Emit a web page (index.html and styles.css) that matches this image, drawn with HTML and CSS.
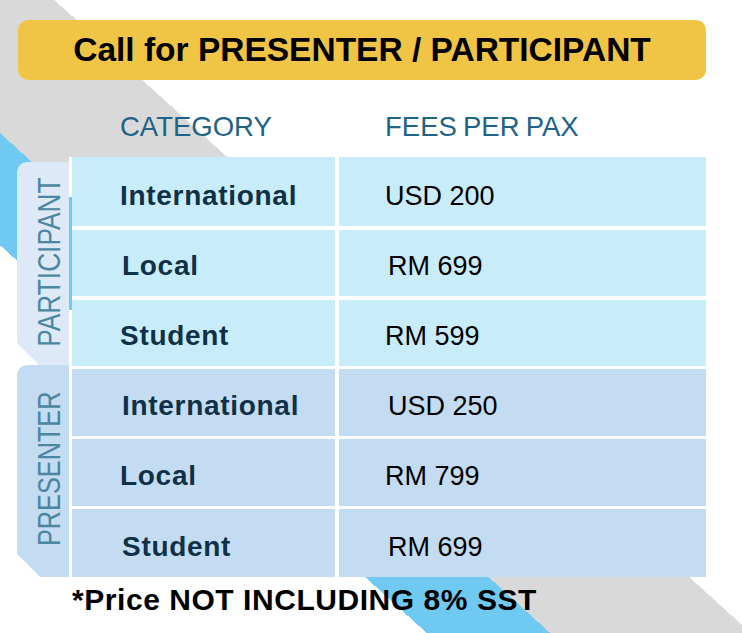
FILE: index.html
```html
<!DOCTYPE html>
<html lang="en">
<head>
<meta charset="utf-8">
<title>Call for Presenter / Participant</title>
<link rel="stylesheet" href="styles.css">
</head>
<body>
<div class="page">
  <div class="title">Call for PRESENTER / PARTICIPANT</div>
  <div class="heads">
    <span class="h-cat">CATEGORY</span>
    <span class="h-fee">FEES PER PAX</span>
  </div>
  <div class="table">
    <div class="group participant">
      <div class="tab"><span>PARTICIPANT</span></div>
      <div class="spine"></div>
      <div class="rows">
        <div class="row"><div class="cat">International</div><div class="fee">USD 200</div></div>
        <div class="row nudge"><div class="cat">Local</div><div class="fee">RM 699</div></div>
        <div class="row"><div class="cat">Student</div><div class="fee">RM 599</div></div>
      </div>
    </div>
    <div class="group presenter">
      <div class="tab"><span>PRESENTER</span></div>
      <div class="spine"></div>
      <div class="rows">
        <div class="row nudge"><div class="cat">International</div><div class="fee">USD 250</div></div>
        <div class="row"><div class="cat">Local</div><div class="fee">RM 799</div></div>
        <div class="row nudge"><div class="cat">Student</div><div class="fee">RM 699</div></div>
      </div>
    </div>
  </div>
  <div class="note">*Price NOT INCLUDING 8% SST</div>
</div>
</body>
</html>
```
FILE: styles.css
```css
* { box-sizing: border-box; }
html, body { margin: 0; padding: 0; }

.page {
  width: 742px;
  height: 633px;
  overflow: hidden;
  padding: 20px 36px 0 17px;
  background: linear-gradient(42.27deg,
    #ffffff 287px,
    #6fc9f1 287px, #6fc9f1 370px,
    #d9d9d9 370px, #d9d9d9 505px,
    #ffffff 505px);
  font-family: "Liberation Sans", Arial, sans-serif;
}

.title {
  margin-left: 1px;
  height: 60px;
  border-radius: 10px;
  background: #f0c546;
  display: flex;
  align-items: center;
  justify-content: center;
  font-weight: 700;
  font-size: 33.5px;
  line-height: 1;
  color: #000;
}

.heads {
  display: flex;
  margin-top: 33px;
  font-size: 27.5px;
  line-height: 27px;
  color: #1f6385;
}
.h-cat { margin-left: 55px; width: 267px; padding-left: 48px; }
.h-fee { padding-left: 46px; word-spacing: -1.5px; }

.table {
  margin-top: 17px;
  display: flex;
  flex-direction: column;
}
.group { display: flex; }
.participant { height: 209px; }
.presenter { height: 211px; }

.tab {
  width: 52px;
  display: flex;
  align-items: center;
  justify-content: center;
  padding-left: 11px;
  padding-bottom: 4px;
  border-top-left-radius: 10px;
  clip-path: polygon(0 0, 100% 0, 100% 100%, 23px 100%, 0 calc(100% - 23px));
}
.participant .tab { margin-top: 5px; background: #dde9f6; }
.presenter .tab { margin-top: -1px; background: #c4dcf1; }
.tab span {
  writing-mode: vertical-rl;
  transform: rotate(180deg) scaleY(0.82);
  font-size: 32px;
  line-height: 1;
  color: #4b86a2;
  white-space: nowrap;
}
.presenter .tab span { transform: rotate(180deg) scaleY(0.79); }

.spine { width: 3px; background: #fff; }
.participant .spine {
  background: linear-gradient(to bottom, #fff 40px, #6fc9f1 40px, #6fc9f1 153px, #fff 153px);
}

.rows { flex: 1; display: grid; background: #fff; }
.participant .rows { grid-template-rows: 69px 66px 66px; row-gap: 4px; }
.presenter .rows { grid-template-rows: 67px 67px 68px; row-gap: 3px; padding-top: 3px; }

.row {
  display: grid;
  grid-template-columns: 263px 1fr;
  column-gap: 4px;
}
.participant .row > div { background: #c9ecfb; }
.presenter .row > div { background: #c4dcf1; }

.cat, .fee {
  display: flex;
  align-items: flex-end;
  padding-bottom: 16px;
  white-space: nowrap;
}
.cat {
  padding-left: 48px;
  font-weight: 700;
  font-size: 28px;
  line-height: 28px;
  letter-spacing: 0.7px;
  color: #0f3147;
}
.fee {
  padding-left: 46px;
  font-size: 27px;
  line-height: 27px;
  color: #000;
}
.row.nudge .cat { padding-left: 50px; }
.row.nudge .fee { padding-left: 49px; }

.note {
  margin-top: 8px;
  padding-left: 55px;
  font-weight: 700;
  font-size: 30px;
  line-height: 30px;
  letter-spacing: 0.55px;
  color: #000;
  white-space: nowrap;
}
```
